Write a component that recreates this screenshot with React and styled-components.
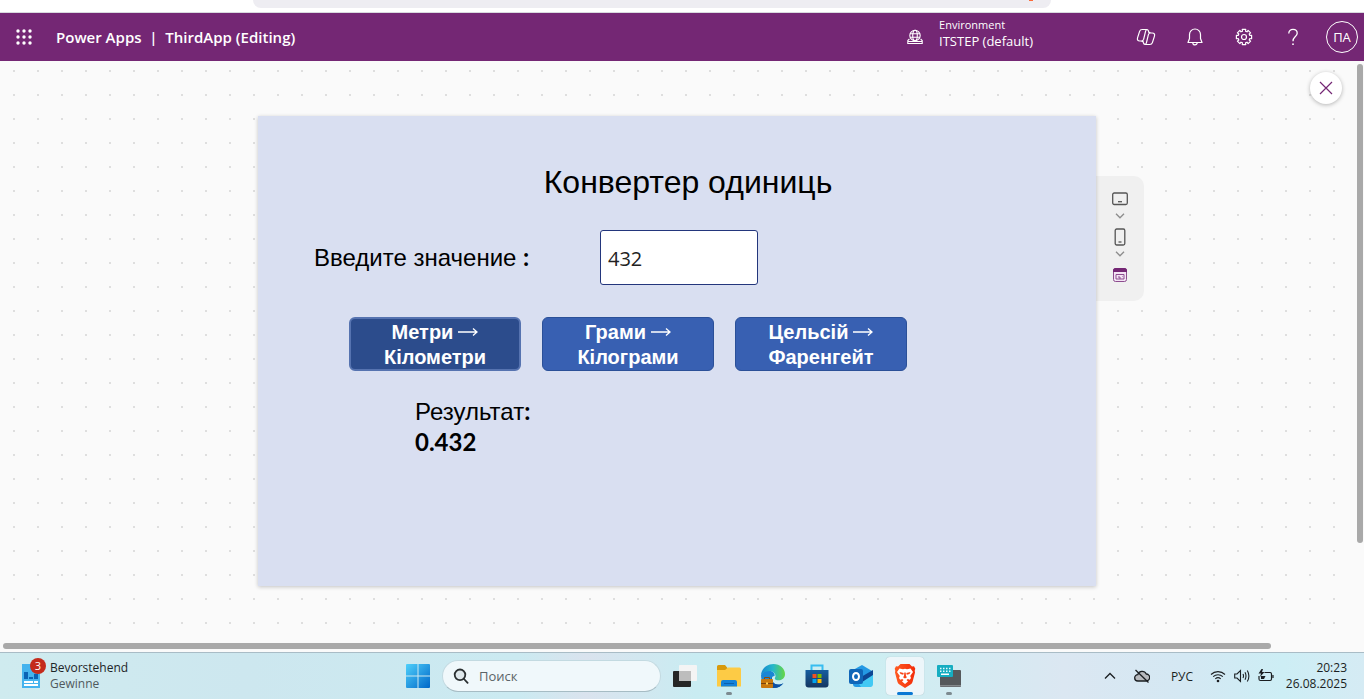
import React, { useState } from "react";
import styled, { createGlobalStyle } from "styled-components";

const ui = '"Open Sans", "Noto Sans", sans-serif';

const GlobalStyle = createGlobalStyle`
  *, *::before, *::after { box-sizing: border-box; }
  body { margin: 0; font-family: ${ui}; background: #fafafa; }
  button, input { font-family: inherit; }
`;

const Page = styled.div`
  min-height: 100vh;
  display: flex;
  flex-direction: column;
`;

/* Browser edge */
const BrowserEdge = styled.div`
  height: 13px;
  flex: none;
  display: flex;
  background: #fff;
  border-bottom: 1px solid #d9d9df;
  padding: 0 313px 4px 253px;
`;
const AddressBar = styled.div`
  flex: 1;
  display: flex;
  justify-content: flex-end;
  padding-right: 18px;
  background: #eeedf2;
  border-radius: 0 0 8px 8px;
`;
const Spark = styled.span`
  width: 4px;
  height: 1px;
  background: #fb6a3a;
`;

/* App header */
const Header = styled.header`
  height: 48px;
  flex: none;
  display: flex;
  align-items: center;
  justify-content: space-between;
  background: #742774;
  color: #fff;
  padding: 0 6px 0 8px;
`;
const HeaderGroup = styled.div`
  display: flex;
  align-items: center;
`;
const IconButton = styled.button`
  width: 32px;
  height: 32px;
  display: flex;
  align-items: center;
  justify-content: center;
  border: 0;
  padding: 0;
  background: none;
  color: inherit;
`;
const Brand = styled.h1`
  margin: 0 0 0 16px;
  font-size: 15px;
  line-height: 24px;
  font-weight: 600;
  white-space: pre;
`;
const Environment = styled.div`
  display: flex;
  align-items: center;
  gap: 16px;
  margin-right: 97px;
`;
const EnvText = styled.div`
  display: flex;
  flex-direction: column;
  padding-bottom: 8px;
`;
const EnvLabel = styled.span`
  font-size: 11px;
  line-height: 16px;
`;
const EnvName = styled.span`
  font-size: 13px;
  line-height: 16px;
`;
const Actions = styled.div`
  display: flex;
  align-items: center;
  gap: 17px;
`;
const Avatar = styled.button`
  width: 32px;
  height: 32px;
  border: 1px solid #fff;
  border-radius: 50%;
  background: none;
  color: #fff;
  font-size: 13px;
  padding: 0;
`;

/* Canvas */
const Workspace = styled.main`
  flex: 1;
  position: relative;
  display: grid;
  grid-template-columns: minmax(0, 1fr) 10px;
  grid-template-rows: 1fr 11px;
  background: #fafafa;
`;
const Stage = styled.div`
  display: grid;
  grid-template-columns: minmax(16px, 1fr) minmax(0, 838px) minmax(48px, 1fr);
  align-items: start;
  padding: 55px 0;
  background-image: conic-gradient(at 2px 2px, transparent 75%, #dedede 0);
  background-size: 24px 24px;
  background-position: 13px 9px;
`;
const Artboard = styled.section`
  grid-column: 2;
  min-height: 470px;
  padding: 42px 56px 40px;
  background: #d9dff1;
  box-shadow: 0 1px 4px rgba(0, 0, 0, 0.22);
  color: #000;
  z-index: 1;
`;
const Title = styled.h2`
  margin: 0 0 23px 22px;
  text-align: center;
  font: 400 32px/48px "Liberation Sans", sans-serif;
`;
const Field = styled.div`
  display: flex;
  align-items: center;
  height: 56px;
`;
const fieldText = '400 24px/30px "Liberation Sans", sans-serif';
const FieldLabel = styled.label`
  width: 286px;
  font: ${fieldText};
`;
const Strong = styled.b`
  font-family: Lato, sans-serif;
  font-weight: 700;
`;
const NumberBox = styled.input`
  width: 158px;
  height: 55px;
  border: 1px solid #23367c;
  border-radius: 3px;
  padding: 2px 7px 0;
  background: #fff;
  color: #222;
  font-size: 20px;
`;
const Converters = styled.div`
  display: flex;
  flex-wrap: wrap;
  gap: 21px;
  margin: 32px 0 0 35px;
`;
const ConvertButton = styled.button`
  width: 172px;
  height: 54px;
  padding: 1px 0 0;
  border: ${(p) => (p.$active ? "2px solid #5673b0" : "1px solid #2b5098")};
  border-radius: 6px;
  background: ${(p) => (p.$active ? "#2c4c8c" : "#3860b2")};
  color: #fff;
  font: 700 20px/25px "Liberation Sans", "DejaVu Sans", sans-serif;
  display: flex;
  flex-direction: column;
  align-items: center;
  justify-content: center;
`;
const Line = styled.span`
  display: flex;
  align-items: center;
  gap: 5px;
`;
const Result = styled.output`
  display: flex;
  flex-direction: column;
  margin: 25px 0 0 101px;
  font: ${fieldText};
`;
const DeviceRail = styled.aside`
  grid-column: 3;
  width: 48px;
  height: 125px;
  margin-top: 60px;
  padding: 11px 0;
  display: flex;
  flex-direction: column;
  align-items: center;
  background: #f0f0f0;
  border-radius: 0 10px 10px 0;
`;
const RailButton = styled.button`
  width: 24px;
  height: ${(p) => (p.$small ? 14 : 24)}px;
  display: flex;
  align-items: center;
  justify-content: center;
  border: 0;
  padding: ${(p) => (p.$small ? "0 0 4px" : "0")};
  background: none;
`;
const CloseButton = styled.button`
  position: absolute;
  top: 11px;
  right: 22px;
  width: 32px;
  height: 32px;
  z-index: 2;
  display: flex;
  align-items: center;
  justify-content: center;
  border: 0;
  padding: 0;
  border-radius: 50%;
  background: #fff;
  box-shadow: 0 1px 4px rgba(0, 0, 0, 0.28);
`;
const VerticalTrack = styled.div`
  padding: 3px 1px 0 3px;
`;
const HorizontalTrack = styled.div`
  grid-column: 1 / -1;
  padding: 2px 3px 3px;
`;
const Thumb = styled.div`
  border-radius: 3px;
  background: #a9a9a9;
  height: ${(p) => (p.$vertical ? "83%" : "6px")};
  width: ${(p) => (p.$vertical ? "6px" : "93.4%")};
`;

/* Taskbar */
const Taskbar = styled.footer`
  height: 47px;
  flex: none;
  display: grid;
  grid-template-columns: 1fr auto 1fr;
  align-items: center;
  border-top: 1px solid #a9bcc6;
  background: linear-gradient(90deg, #cfebef 0%, #cde7ef 18%, #cbeaf1 38%, #dae3ee 43%, #c9ecf2 51%, #cdeef2 64%, #dbe7f2 78%, #d4e8f3 87%, #cdeef5 94%, #d5ebf4 100%);
`;
const Widget = styled.button`
  position: relative;
  justify-self: start;
  display: flex;
  align-items: center;
  gap: 10px;
  margin-left: 22px;
  padding: 0;
  border: 0;
  background: none;
  text-align: left;
  color: #1d2528;
`;
const WidgetText = styled.span`
  display: flex;
  flex-direction: column;
  font-size: 12px;
  line-height: 16px;
`;
const Muted = styled.span`
  color: #50595d;
`;
const Badge = styled.span`
  position: absolute;
  left: 8px;
  top: -2px;
  width: 16px;
  height: 16px;
  border-radius: 50%;
  background: #c42b1c;
  color: #fff;
  font-size: 11px;
  line-height: 16px;
  text-align: center;
`;
const Apps = styled.nav`
  display: flex;
  align-items: center;
  padding-left: 3px;
`;
const AppButton = styled.button`
  position: relative;
  width: 44px;
  height: 46px;
  display: flex;
  align-items: center;
  justify-content: center;
  border: 0;
  padding: 0;
  background: none;
`;
const ActivePlate = styled.span`
  display: flex;
  align-items: center;
  justify-content: center;
  width: 38px;
  height: 38px;
  border-radius: 4px;
  background: #edf6fa;
  box-shadow: 0 0 1px rgba(0, 0, 0, 0.25);
`;
const RunMark = styled.span`
  position: absolute;
  bottom: 4px;
  left: 50%;
  transform: translateX(-50%);
  width: ${(p) => (p.$active ? 16 : 6)}px;
  height: 3px;
  border-radius: 2px;
  background: ${(p) => (p.$active ? "#0a78d4" : "#7d8a90")};
`;
const Search = styled.label`
  display: flex;
  align-items: center;
  gap: 10px;
  width: 219px;
  height: 32px;
  margin: 0 2px;
  padding: 0 10px;
  border: 1px solid #c3dae1;
  border-bottom-color: #a6bcc4;
  border-radius: 16px;
  background: #f0f8fb;
`;
const SearchInput = styled.input`
  flex: 1;
  min-width: 0;
  border: 0;
  padding: 0;
  outline: 0;
  background: none;
  font-size: 13px;
  color: #333;
  &::placeholder { color: #5b6468; opacity: 1; }
`;
const Tray = styled.div`
  justify-self: end;
  display: flex;
  align-items: center;
  padding-right: 17px;
  color: #1b1f22;
`;
const TrayButton = styled.button`
  width: ${(p) => p.$w || 24}px;
  height: 32px;
  display: flex;
  align-items: center;
  justify-content: center;
  border: 0;
  padding: 0;
  background: none;
  color: inherit;
  font-size: 12px;
`;
const Clock = styled.time`
  width: 69px;
  display: flex;
  flex-direction: column;
  align-items: flex-end;
  font-size: 12px;
  line-height: 16px;
  white-space: nowrap;
`;

const Svg = ({ s = 20, w = s, h = s, vb, children, ...rest }) => (
  <svg width={w} height={h} viewBox={vb || `0 0 ${w} ${h}`} fill="none" stroke="currentColor" aria-hidden="true" {...rest}>
    {children}
  </svg>
);

const Waffle = () => (
  <Svg s={16} stroke="none" fill="currentColor">
    {[2, 8, 14].map((y) => [2, 8, 14].map((x) => <circle key={`${x}-${y}`} cx={x} cy={y} r="1.7" />))}
  </Svg>
);
const EnvironmentIcon = () => (
  <Svg s={16} strokeWidth="1.1">
    <circle cx="8" cy="6.5" r="5.2" />
    <ellipse cx="8" cy="6.5" rx="2.3" ry="5.2" />
    <path d="M3.200 4.700h9.600M3.200 8.300h9.600M2.400 10 .8 11.500v3h14.400v-3L13.600 10M1 12.500h14" />
  </Svg>
);
const copilotHalf = "M14.500 4.500H12.900L12.500 3c-.3-1-.9-1.500-1.900-1.500H6.200c-1.400 0-2.200.6-2.600 1.900L1.600 9.600c-.7 2.200.2 3.400 2.200 3.400h1.700c1.200 0 1.800-.5 2.100-1.600l2-8.200c.3-1.100.9-1.700 1.600-1.700";
const CopilotIcon = () => (
  <Svg w={20} h={18} strokeWidth="1.2" strokeLinejoin="round">
    <path d={copilotHalf} />
    <path d={copilotHalf} transform="rotate(180 10 9)" />
  </Svg>
);
const BellIcon = () => (
  <Svg s={20} strokeWidth="1.2" strokeLinejoin="round">
    <path d="M10 2a5.500 5.500 0 0 0-5.500 5.500v4L3 15.500h14l-1.500-4v-4A5.500 5.500 0 0 0 10 2Z" />
    <path d="M7.800 15.700a2.200 2.200 0 0 0 4.400 0" />
  </Svg>
);
const gearPath = Array.from({ length: 8 }, (_, i) =>
  [[-13, 7.8], [13, 7.8], [15, 6], [30, 6]].map(([offset, r]) => {
    const a = ((i * 45 + offset) * Math.PI) / 180;
    return `${(9 + r * Math.sin(a)).toFixed(2)} ${(9 - r * Math.cos(a)).toFixed(2)}`;
  })
).flat().join("L");
const GearIcon = () => (
  <Svg s={18} strokeWidth="1.2" strokeLinejoin="round">
    <path d={`M${gearPath}Z`} />
    <circle cx="9" cy="9" r="2.5" />
  </Svg>
);
const HelpIcon = () => (
  <Svg s={20} strokeWidth="1.3">
    <path d="M5.800 6.500c0-2.600 1.800-4.200 4.200-4.200s4.200 1.500 4.200 3.900c0 1.800-1 2.700-2.300 3.900C10.600 11.300 10 12 10 14.200" />
    <circle cx="10" cy="17.200" r=".9" fill="currentColor" stroke="none" />
  </Svg>
);
const CloseIcon = () => (
  <Svg s={14} stroke="#742774" strokeWidth="1.2"><path d="m1 1 12 12M13 1 1 13" /></Svg>
);
const Arrow = () => (
  <Svg w={20} h={10} strokeWidth="1.3"><path d="M0 5h19M15 1.500 19 5l-4 3.500" /></Svg>
);
const TabletIcon = () => (
  <Svg w={16} h={14} stroke="#555" strokeWidth="1.3"><rect x=".7" y="1" width="14.6" height="11.5" rx="1.5" /><path d="M6 9.700h4" /></Svg>
);
const PhoneIcon = () => (
  <Svg w={12} h={18} stroke="#555" strokeWidth="1.3"><rect x="1.2" y="1" width="9.6" height="16" rx="1.5" /><path d="M4.500 14h3" /></Svg>
);
const DownIcon = () => (
  <Svg w={10} h={6} stroke="#8c8c8c" strokeWidth="1.3"><path d="m1 .8 4 4 4-4" /></Svg>
);
const FormIcon = () => (
  <Svg s={16} stroke="#8d4c8f">
    <rect x="1.5" y="1.5" width="13" height="13" rx="2" fill="#f3e4f4" />
    <path d="M1 5V3.500C1 2 2 1 3.500 1h9C14 1 15 2 15 3.500V5Z" fill="#742774" stroke="none" />
    <path d="M4 7.500h8v4.500H4zM6 10h2v2M10 9.500h.5" />
  </Svg>
);

const WidgetIcon = () => (
  <Svg w={18} h={24} stroke="none">
    <path fill="#45b3ee" d="M0 0h18v24H0z" />
    <path fill="#0b63b5" d="M2 8h4v7H2zM7 13h4v2H7zM12 10h4v5h-4z" />
    <path fill="#fff" d="M2 17h9v2H2zM12 17h4v2h-4zM2 20h14v2H2z" />
  </Svg>
);
const StartIcon = () => (
  <Svg s={24} stroke="none">
    <defs><linearGradient id="win" x1="0" y1="0" x2="1" y2="1"><stop stopColor="#4fd0fb" /><stop offset="1" stopColor="#0067c8" /></linearGradient></defs>
    <path fill="url(#win)" d="M1 0h10.500v11.500H0V1q0-1 1-1ZM12.500 0H23q1 0 1 1v10.500H12.500ZM0 12.500h11.500V24H1q-1 0-1-1ZM12.500 12.500H24V23q0 1-1 1H12.500Z" />
  </Svg>
);
const SearchIcon = () => (
  <Svg s={16} stroke="#2a2f31" strokeWidth="1.8" strokeLinecap="round"><circle cx="7" cy="6.8" r="5.3" fill="#dfe8ec" /><path d="m11 11 3.600 3.800" /></Svg>
);
const TaskViewIcon = () => (
  <Svg s={24} stroke="none">
    <rect x="0" y="7" width="18" height="16" rx="1" fill="#262626" />
    <rect x="6" y="1" width="18" height="16" rx="1" fill="#f4f4f4" />
    <path d="M6 7h12v10H6z" fill="#bdbdbd" />
  </Svg>
);
const FolderIcon = () => (
  <Svg s={24} stroke="none">
    <path fill="#d89a0c" d="M0 2.500Q0 1 1.500 1H8l2.500 3H22v6H0Z" />
    <path fill="#fdcb45" d="M0 6h8l3-2.500h11.500Q24 3.500 24 5v17.500H0Z" />
    <path fill="#1481d8" d="M4 22.500V18q0-2 2-2h12q2 0 2 2v4.500Z" />
    <path fill="#0b5fae" d="M7 19h10v1H7z" />
  </Svg>
);
const EdgeIcon = () => (
  <Svg s={24} stroke="none">
    <defs>
      <linearGradient id="edgeTop" x1="0" x2="1"><stop stopColor="#1688cf" /><stop offset=".5" stopColor="#26b7ca" /><stop offset="1" stopColor="#67d742" /></linearGradient>
    </defs>
    <path fill="#1a86d3" d="M0 11C2 7 6 5.500 10 7c3 1 4 3 3.500 5-4 0-4 7 3 8.500 2 .4 4 0 6-1.500-2 3-5.500 5-10 5C5 24 0 19 0 11Z" />
    <path fill="#0f4f9e" d="M11 13c-1 4 2 7.500 6 7.500 2 0 4-.5 5.500-1.500-2 3-5.500 5-10 5-3 0-5-2-5-5Z" />
    <path fill="url(#edgeTop)" d="M0 11C.500 5 5.500 0 12.500 0 19 0 24 4.700 24 10c0 4-3 6.300-6.500 6.300-3 0-4.400-1.100-3.300-3C15.500 10.500 12.500 7 9 7 5 7 1.500 8.500 0 11Z" />
    <rect x="0" y="15" width="12" height="9" rx="1" fill="#c8770b" />
    <path d="M3.500 15v-1.500h5V15" stroke="#8e4c07" />
    <path d="M0 19.500h12" stroke="#79430b" />
    <path fill="#ffd35a" d="M5 18.500h2v2H5z" />
  </Svg>
);
const StoreIcon = () => (
  <Svg s={24} stroke="none">
    <defs><linearGradient id="bag" x1="0" y1="0" x2="0" y2="1"><stop stopColor="#155ea0" /><stop offset="1" stopColor="#153661" /></linearGradient></defs>
    <path d="M6.500 7V1.500h11V7" stroke="#38bdf0" strokeWidth="2" />
    <path fill="url(#bag)" d="M.5 6h23v14.500q0 3-3 3h-17q-3 0-3-3Z" />
    <path fill="#f25022" d="M7.500 10h4v4h-4z" /><path fill="#7fba00" d="M12.500 10h4v4h-4z" />
    <path fill="#00a4ef" d="M7.500 15h4v4h-4z" /><path fill="#ffb900" d="M12.500 15h4v4h-4z" />
  </Svg>
);
const OutlookIcon = () => (
  <Svg s={24} stroke="none">
    <path fill="#2499e4" d="M4 6 13 1l10 6v13q0 3-3 3H7q-3 0-3-3Z" />
    <path fill="#0d4694" d="m12 13 12-7v6L13 19Z" />
    <path fill="#42c9f4" d="m10 20 14-9v9q0 3-3 3h-9Z" />
    <rect x="0" y="5" width="14" height="15" rx="2" fill="#1066b8" />
    <ellipse cx="7" cy="12.5" rx="3" ry="3.6" stroke="#fff" strokeWidth="2" />
  </Svg>
);
const BraveIcon = () => (
  <Svg w={22} h={24} stroke="none">
    <defs><linearGradient id="brave" x1="0" x2="1"><stop stopColor="#ff5a22" /><stop offset="1" stopColor="#f22b09" /></linearGradient></defs>
    <path fill="url(#brave)" d="M6.500 0h9L18 2.500l2-.3 1.300 2.600-.6 2 .3 1.700-2.500 9.500q-.5 1.500-2 2.500l-5.500 3.500L5.500 20.500q-1.500-1-2-2.500L1 8.500l.3-1.700-.6-2L2 2.200l2 .3Z" />
    <path fill="#fff" d="m5.500 4.500 3.500.7 2-.5 2 .5 3.500-.7L19 8l-2.800 4 .8 2-1.200 1.800-2-.8-1.300 1 1.500 1.500-3 2.500-3-2.500L9.500 16l-1.300-1-2 .8L5 14l.8-2L3 8Z" />
    <path fill="#f84417" d="M5.500 8 9.700 9l-.5 1.700L6.500 10ZM16.500 8l-4.200 1 .5 1.700 2.700-.7ZM10.300 8.500h1.400l.3 3.500 1 1.300-2 1.200-2-1.200 1-1.300Z" />
  </Svg>
);
const KeyboardIcon = () => (
  <Svg s={24} stroke="none">
    <rect x="3" y="6" width="21" height="17" rx="1" fill="#56595c" />
    <path fill="#85898c" d="M3 21h21v1.500H3z" />
    <rect x="0" y="1" width="16" height="12" rx="1" fill="#16adc1" />
    <path stroke="#e5fcff" strokeWidth="1.5" strokeDasharray="1.5 1.500" d="M3 4.500h11M3 7.200h11" />
    <path fill="#fff" d="M4 9.500h8V11H4z" />
  </Svg>
);
const ChevronUp = () => (
  <Svg w={12} h={8} strokeWidth="1.3"><path d="m1 6.500 5-5 5 5" /></Svg>
);
const CloudOff = () => (
  <Svg s={16} strokeWidth="1.3">
    <path fill="#b7b9bd" d="M4 13a3.200 3.200 0 0 1-.2-6.400A4.600 4.600 0 0 1 12.300 6 3.500 3.500 0 0 1 12 13Z" />
    <path d="m1.500 2 13 12.500" />
  </Svg>
);
const WifiIcon = () => (
  <Svg s={16} strokeWidth="1.1">
    <path d="M1 6.500a10 10 0 0 1 14 0M3.200 8.700a7 7 0 0 1 9.600 0M5.300 10.900a4 4 0 0 1 5.400 0" />
    <circle cx="8" cy="13" r="1.3" fill="currentColor" stroke="none" />
  </Svg>
);
const SoundIcon = () => (
  <Svg s={16} strokeWidth="1.1">
    <path d="M.7 6H3l3.500-3.500v11L3 10H.7ZM9 6q1 2 0 4M11 4.300q2 3.700 0 7.400M13.300 2.500q3.200 5.500 0 11" />
  </Svg>
);
const BatteryIcon = () => (
  <Svg s={16} strokeWidth="1.2">
    <path d="M6.500 4.500H12q1.500 0 1.500 1.500v5q0 1.500-1.500 1.500H2.500Q1 12.500 1 11V8M15 7v3" />
    <path fill="currentColor" stroke="none" d="M3 8h4.500L6 11H3ZM3.500 1 .5 5.500H3L2 9l4.500-5H4L5 1Z" />
  </Svg>
);

const converters = [
  { id: "length", from: "Метри", to: "Кілометри" },
  { id: "mass", from: "Грами", to: "Кілограми" },
  { id: "temp", from: "Цельсій", to: "Фаренгейт" },
];
const apps = [
  { name: "Task view", icon: TaskViewIcon },
  { name: "File Explorer", icon: FolderIcon, running: true },
  { name: "Edge", icon: EdgeIcon },
  { name: "Store", icon: StoreIcon },
  { name: "Outlook", icon: OutlookIcon },
  { name: "Brave", icon: BraveIcon, running: true, active: true },
  { name: "Keyboard", icon: KeyboardIcon, running: true },
];

const convert = (mode, value) => {
  const n = Number(value) || 0;
  return mode === "temp" ? n * 1.8 + 32 : n / 1000;
};

export default function App() {
  const [value, setValue] = useState("432");
  const [mode, setMode] = useState("length");

  return (
    <Page>
      <GlobalStyle />
      <BrowserEdge><AddressBar><Spark /></AddressBar></BrowserEdge>
      <Header>
        <HeaderGroup>
          <IconButton aria-label="App launcher"><Waffle /></IconButton>
          <Brand>{"Power Apps  |  ThirdApp (Editing)"}</Brand>
        </HeaderGroup>
        <HeaderGroup>
          <Environment>
            <EnvironmentIcon />
            <EnvText>
              <EnvLabel>Environment</EnvLabel>
              <EnvName>ITSTEP (default)</EnvName>
            </EnvText>
          </Environment>
          <Actions>
            <IconButton aria-label="Copilot"><CopilotIcon /></IconButton>
            <IconButton aria-label="Notifications"><BellIcon /></IconButton>
            <IconButton aria-label="Settings"><GearIcon /></IconButton>
            <IconButton aria-label="Help"><HelpIcon /></IconButton>
            <Avatar>ПА</Avatar>
          </Actions>
        </HeaderGroup>
      </Header>

      <Workspace>
        <Stage>
          <Artboard>
            <Title>Конвертер одиниць</Title>
            <Field>
              <FieldLabel htmlFor="amount">Введите значение <Strong>:</Strong></FieldLabel>
              <NumberBox id="amount" value={value} onChange={(e) => setValue(e.target.value)} />
            </Field>
            <Converters>
              {converters.map((c) => (
                <ConvertButton key={c.id} $active={mode === c.id} onClick={() => setMode(c.id)}>
                  <Line>{c.from}<Arrow /></Line>
                  <Line>{c.to}</Line>
                </ConvertButton>
              ))}
            </Converters>
            <Result htmlFor="amount">
              <span>Результат<Strong>:</Strong></span>
              <Strong>{convert(mode, value)}</Strong>
            </Result>
          </Artboard>
          <DeviceRail>
            <RailButton aria-label="Tablet"><TabletIcon /></RailButton>
            <RailButton $small aria-label="Tablet sizes"><DownIcon /></RailButton>
            <RailButton aria-label="Phone"><PhoneIcon /></RailButton>
            <RailButton $small aria-label="Phone sizes"><DownIcon /></RailButton>
            <RailButton aria-label="Form"><FormIcon /></RailButton>
          </DeviceRail>
        </Stage>
        <VerticalTrack><Thumb $vertical /></VerticalTrack>
        <HorizontalTrack><Thumb /></HorizontalTrack>
        <CloseButton aria-label="Close"><CloseIcon /></CloseButton>
      </Workspace>

      <Taskbar>
        <Widget>
          <WidgetIcon />
          <Badge>3</Badge>
          <WidgetText>
            <span>Bevorstehend</span>
            <Muted>Gewinne</Muted>
          </WidgetText>
        </Widget>
        <Apps>
          <AppButton aria-label="Start"><StartIcon /></AppButton>
          <Search>
            <SearchIcon />
            <SearchInput placeholder="Поиск" aria-label="Поиск" />
          </Search>
          {apps.map(({ name, icon: Icon, running, active }) => (
            <AppButton key={name} aria-label={name}>
              {active ? <ActivePlate><Icon /></ActivePlate> : <Icon />}
              {running && <RunMark $active={active} />}
            </AppButton>
          ))}
        </Apps>
        <Tray>
          <TrayButton $w={32} aria-label="Hidden icons"><ChevronUp /></TrayButton>
          <TrayButton $w={32} aria-label="Cloud"><CloudOff /></TrayButton>
          <TrayButton $w={48}>РУС</TrayButton>
          <TrayButton aria-label="Network"><WifiIcon /></TrayButton>
          <TrayButton aria-label="Volume"><SoundIcon /></TrayButton>
          <TrayButton aria-label="Battery"><BatteryIcon /></TrayButton>
          <Clock>
            <span>20:23</span>
            <span>26.08.2025</span>
          </Clock>
        </Tray>
      </Taskbar>
    </Page>
  );
}
